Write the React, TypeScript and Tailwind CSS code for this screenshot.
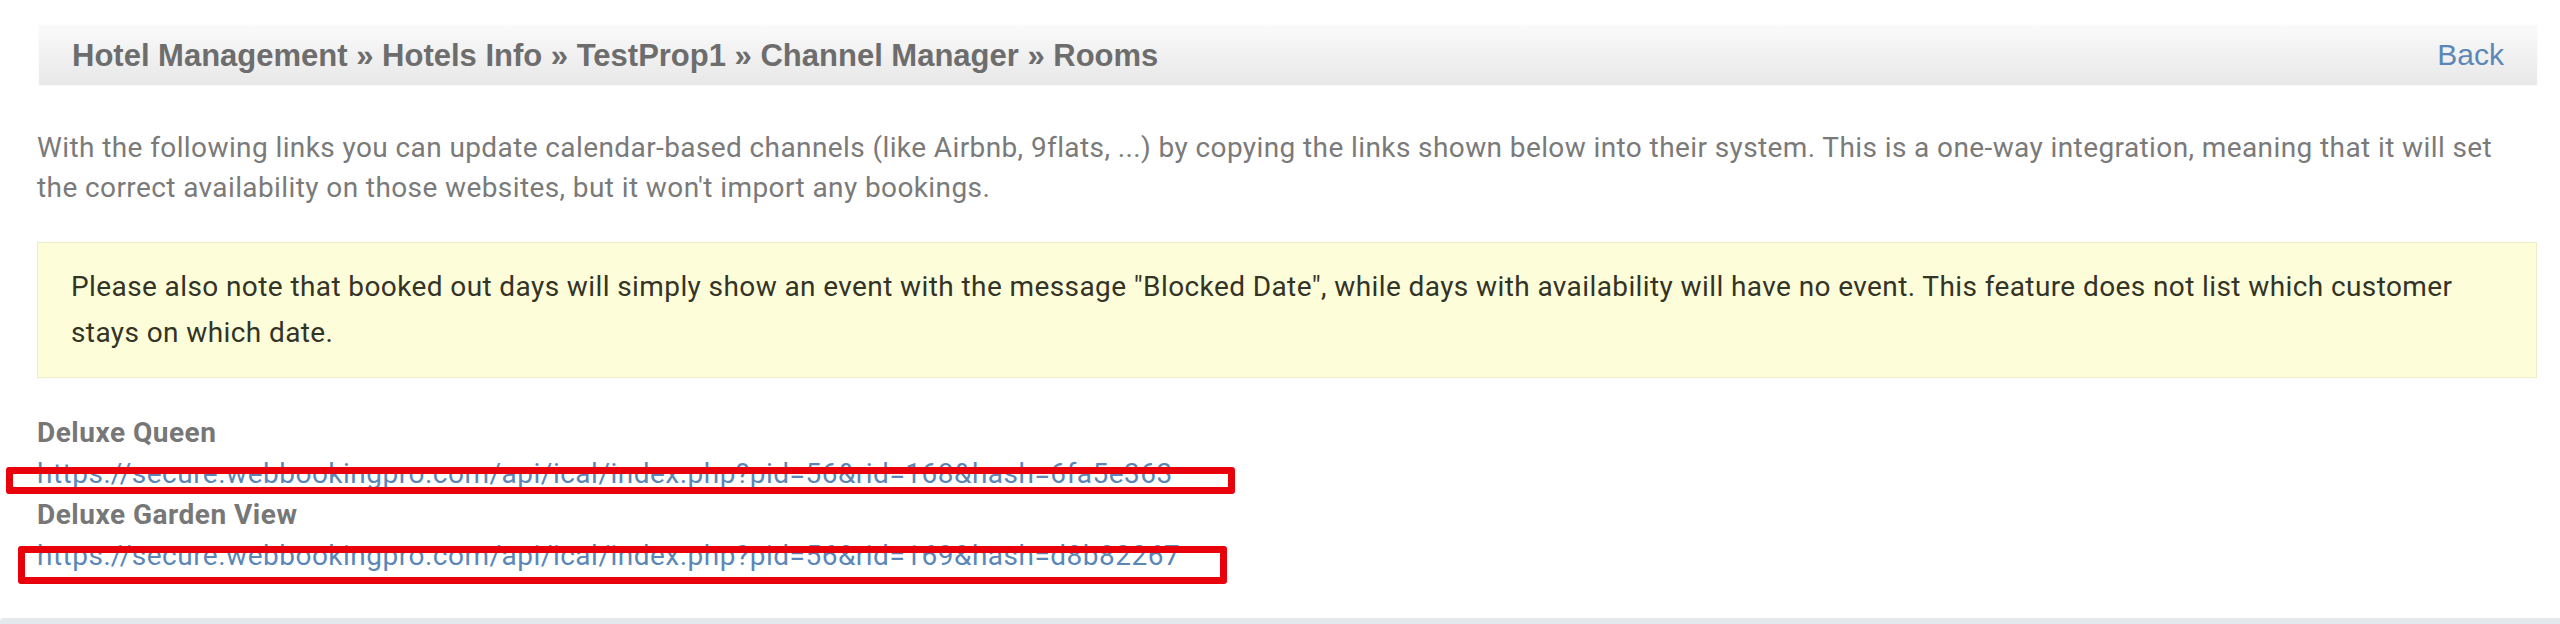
import React from "react";

const rooms = [
  {
    name: "Deluxe Queen",
    url: "https://secure.webbookingpro.com/api/ical/index.php?pid=56&rid=168&hash=6fa5e363",
  },
  {
    name: "Deluxe Garden View",
    url: "https://secure.webbookingpro.com/api/ical/index.php?pid=56&rid=169&hash=d8b82267",
  },
];

export default function App() {
  return (
    <div className="relative h-[624px] w-full overflow-hidden bg-white" style={{ fontFamily: "Roboto, 'Noto Sans', sans-serif" }}>
      <div className="pl-[37px] pr-[23px] pt-[25px]">
        <div
          className="ml-[2px] flex h-[60px] items-center justify-between bg-gradient-to-b from-[#fafafa] to-[#e8e8e8] pl-[33px] pr-[33px] shadow-[0_0_1px_rgba(0,0,0,0.08)]"
          style={{ fontFamily: "'Liberation Sans', Arial, sans-serif" }}
        >
          <h1 className="text-[31px] font-bold leading-none text-[#6d6d6d]">
            Hotel Management » Hotels Info » TestProp1 » Channel Manager » Rooms
          </h1>
          <a className="text-[30px] leading-none text-[#5b87b8]" href="#">
            Back
          </a>
        </div>

        <p className="mt-[43px] text-[28px] leading-[40px] tracking-[0.4px] text-[#7a7a7a]">
          With the following links you can update calendar-based channels (like Airbnb, 9flats, ...) by copying the links shown below into their system. This is a one-way integration, meaning that it will set the correct availability on those websites, but it won't import any bookings.
        </p>

        <div className="mt-[34px] border border-[#efedc9] bg-[#fdfdd9] px-[33px] py-[21px] text-[28px] leading-[46px] tracking-[0.4px] text-[#333326]">
          Please also note that booked out days will simply show an event with the message "Blocked Date", while days with availability will have no event. This feature does not list which customer stays on which date.
        </div>

        <div className="mt-[34px] text-[28px] leading-[41px] tracking-[0.5px]">
          {rooms.map((r) => (
            <div key={r.name}>
              <div className="font-bold text-[#777777]">{r.name}</div>
              <a href="#" className="block text-[#5b87b8]">
                {r.url}
              </a>
            </div>
          ))}
        </div>
      </div>

      <div className="mt-[42px] h-[6px] w-full rounded-tl-[4px] bg-[#e6e9ec]" />

      <div className="pointer-events-none absolute left-[6px] top-[467px] h-[27px] w-[1229px] rounded-[3px] border-[7px] border-[#e8000b]" />
      <div className="pointer-events-none absolute left-[18px] top-[546px] h-[38px] w-[1209px] rounded-[3px] border-[7px] border-[#e8000b]" />
    </div>
  );
}
